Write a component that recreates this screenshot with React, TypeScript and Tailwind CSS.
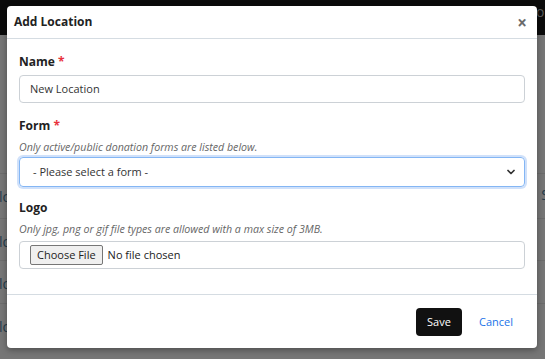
import { ChevronDown } from "lucide-react";

const rows = [
  { h: "h-[45px]", left: "lo", right: "S" },
  { h: "h-[42px]", left: "lo", right: "" },
  { h: "h-[43px]", left: "lo", right: "" },
  { h: "h-[41px]", left: "lo", right: "" },
];

export default function App() {
  return (
    <div className="relative h-[359px] w-[545px] overflow-hidden bg-[#767676] font-['Open_Sans',sans-serif]">
      {/* page behind the overlay */}
      <div className="flex h-[35px] items-start justify-end bg-[#0b0b0b] pt-[1px]">
        <span className="mr-[-8px] text-[14px] text-[#5a5a5a]">You</span>
      </div>
      <div className="h-[138px]" />
      {rows.map((r, i) => (
        <div
          key={i}
          className={`flex items-start justify-between border-t border-[#6c6c6c] ${r.h}`}
        >
          <span className="ml-[-1px] mt-[12px] text-[14px] text-[#243c4c]">{r.left}</span>
          <span className="mr-[-4px] mt-[10px] text-[14px] text-[#243c4c]">{r.right}</span>
        </div>
      ))}

      {/* modal */}
      <div className="absolute left-[7px] top-[6px] w-[530px] rounded-[4px] bg-white shadow-[0_2px_6px_rgba(0,0,0,0.35)]">
        <div className="flex h-[33px] items-center justify-between border-b border-[#d5dce2] pl-[7px] pr-[10px]">
          <h2 className="text-[12px] font-bold text-[#222]">Add Location</h2>
          <span className="text-[17px] font-bold leading-none text-[#6b6b6b]">×</span>
        </div>

        <div className="px-3 pb-[25px] pt-[14px]">
          <label className="block text-[12px] font-bold leading-[18px] text-[#222]">
            Name <span className="text-[#e8323c]">*</span>
          </label>
          <div className="mt-[4px] flex h-[28px] items-center rounded-[4px] border border-[#ccd1d6] px-[10px] text-[11px] text-[#333]">
            New Location
          </div>

          <label className="mt-[14px] block text-[12px] font-bold leading-[18px] text-[#222]">
            Form <span className="text-[#e8323c]">*</span>
          </label>
          <p className="mt-[4px] text-[10.65px] italic leading-[16px] text-[#666]">
            Only active/public donation forms are listed below.
          </p>
          <div className="mt-[2px] flex h-[30px] items-center justify-between rounded-[4px] border border-[#84b6f4] pl-[13px] pr-[7px] text-[11px] text-[#333] shadow-[0_0_0_2px_rgba(120,170,240,0.35)]">
            <span>- Please select a form -</span>
            <ChevronDown size={12} strokeWidth={3.5} className="text-[#333]" />
          </div>

          <label className="mt-[12px] block text-[12px] font-bold leading-[18px] text-[#222]">
            Logo
          </label>
          <p className="mt-[4px] text-[10.65px] italic leading-[16px] text-[#666]">
            Only jpg, png or gif file types are allowed with a max size of 3MB.
          </p>
          <div className="mt-[4px] flex h-[28px] items-center gap-[5px] rounded-[4px] border border-[#ccd1d6] px-[10px] text-[11px] text-[#222]">
            <span className="flex h-[20px] items-center rounded-[2px] border border-[#767676] bg-[#efefef] px-[6px]">
              Choose File
            </span>
            <span>No file chosen</span>
          </div>
        </div>

        <div className="flex items-center justify-end gap-[5px] border-t border-[#d5dce2] pb-[12px] pr-3 pt-[13px]">
          <button className="h-[28px] w-[46px] rounded-[4px] bg-[#111] text-[11px] text-white">
            Save
          </button>
          <button className="h-[28px] px-3 text-[11px] text-[#1a73e8]">Cancel</button>
        </div>
      </div>
    </div>
  );
}
